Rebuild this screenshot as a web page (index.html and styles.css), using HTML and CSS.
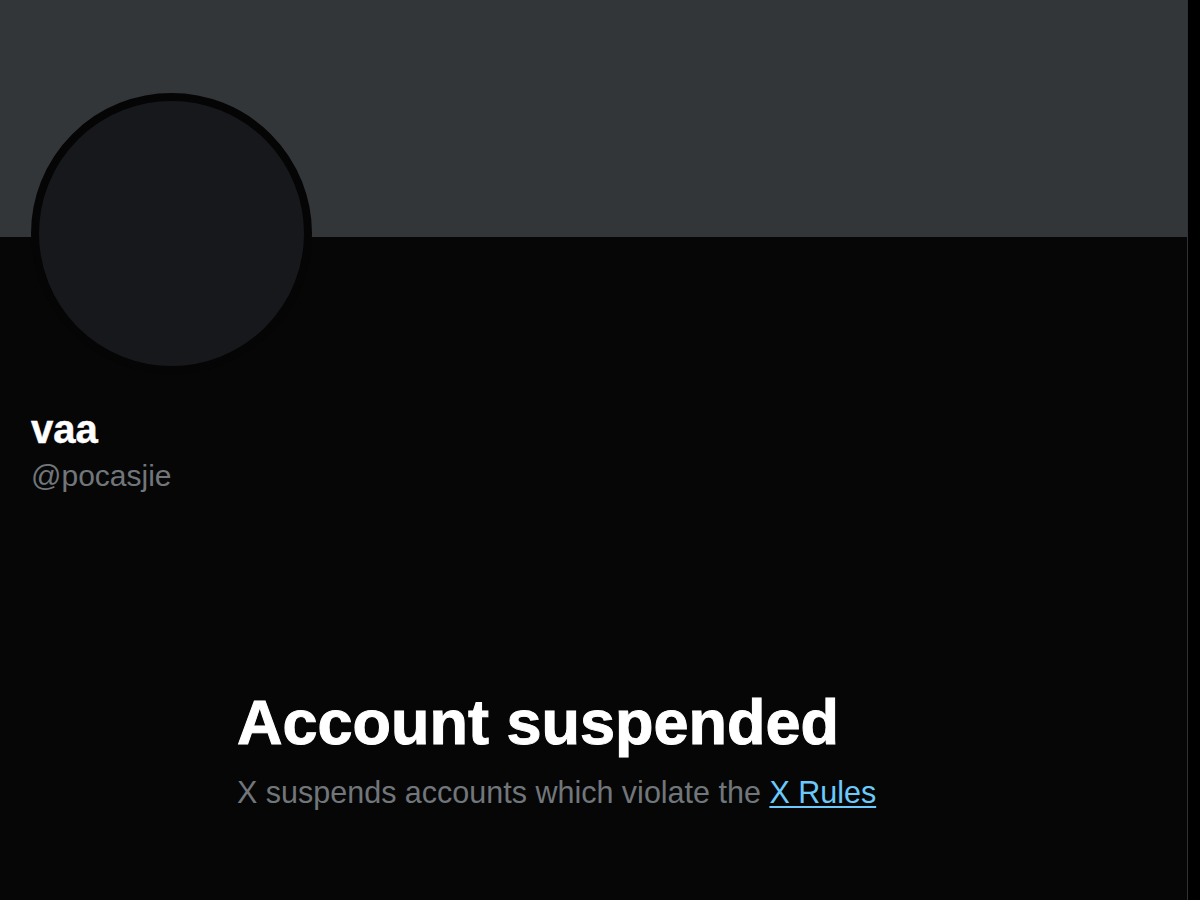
FILE: index.html
```html
<!DOCTYPE html>
<html lang="en">
<head>
<meta charset="utf-8">
<title>vaa (@pocasjie) / X</title>
<link rel="stylesheet" href="styles.css">
</head>
<body>
<main class="column">
  <div class="banner"></div>
  <section class="profile">
    <div class="avatar"></div>
    <div class="name">vaa</div>
    <div class="handle">@pocasjie</div>
  </section>
  <section class="empty">
    <div class="empty-inner">
      <h1 class="empty-title">Account suspended</h1>
      <p class="empty-text">X suspends accounts which violate the <a class="rules-link" href="#">X Rules</a></p>
    </div>
  </section>
</main>
</body>
</html>
```
FILE: styles.css
```css
html, body {
  margin: 0;
  padding: 0;
  background: #000000;
  height: 100%;
}

body {
  font-family: "Liberation Sans", Arial, sans-serif;
  overflow: hidden;
}

.column {
  width: 1187px;
  min-height: 900px;
  background: #060606;
  border-right: 1px solid #2f3336;
  display: flex;
  flex-direction: column;
}

.banner {
  height: 237px;
  background: #333639;
}

.profile {
  padding: 0 31px;
  display: flex;
  flex-direction: column;
  align-items: flex-start;
}

.avatar {
  width: 265px;
  height: 265px;
  margin-top: -144px;
  border-radius: 50%;
  background: #16181c;
  border: 8px solid #050505;
}

.name {
  margin-top: 31px;
  font-size: 40px;
  line-height: 48px;
  font-weight: 700;
  color: #ffffff;
  -webkit-text-stroke: 0.5px #ffffff;
}

.handle {
  margin-top: 3px;
  font-size: 30px;
  line-height: 40px;
  color: #71767b;
}

.empty {
  display: flex;
  justify-content: center;
  margin-top: 190px;
}

.empty-inner {
  width: 713px;
}

.empty-title {
  margin: 0;
  font-size: 63px;
  line-height: 72px;
  font-weight: 700;
  color: #ffffff;
  -webkit-text-stroke: 1px #ffffff;
}

.empty-text {
  margin: 14px 0 0;
  font-size: 30.5px;
  line-height: 40px;
  color: #71767b;
}

.rules-link {
  color: #6bc9fb;
  text-decoration: underline;
  text-decoration-thickness: 2px;
  text-underline-offset: 3px;
}
```
